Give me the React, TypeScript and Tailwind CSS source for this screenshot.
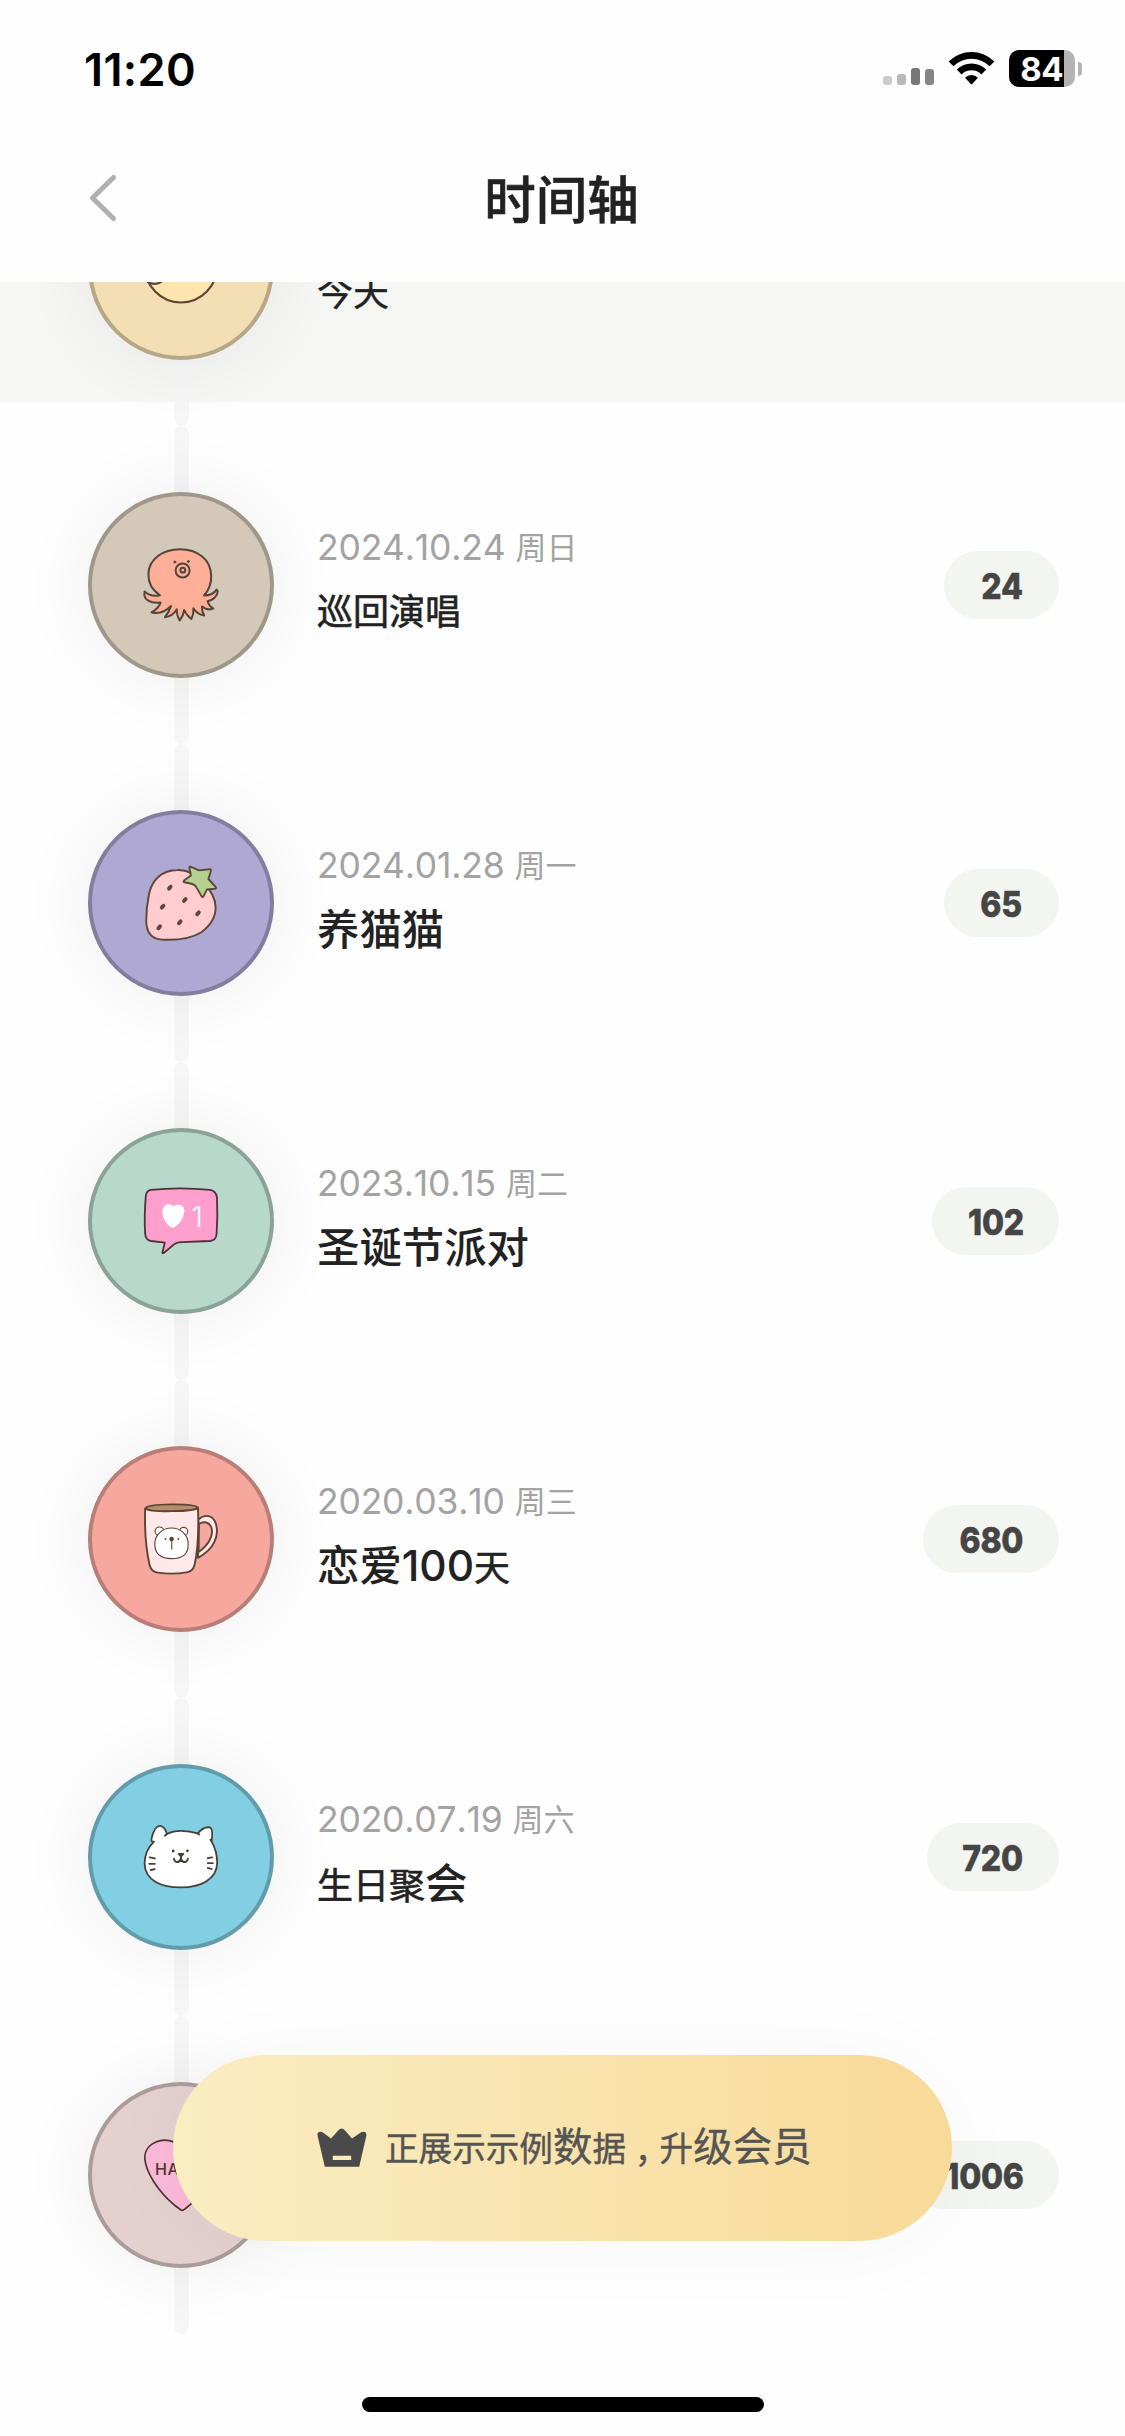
import type { ReactNode } from 'react';
import clsx from 'clsx';

interface Part {
  text: string;
  className: string;
}

interface TimelineEvent {
  date: string;
  weekday: string;
  title: Part[];
  days: string;
  circle: string;
  pill: string;
  icon: ReactNode;
}

const SM = 'text-[36px] font-normal [-webkit-text-stroke:0.6px_#222]';
const LG = 'text-[42.4px] font-medium';

function Chick() {
  return (
    <g stroke="#5d4436" strokeWidth="2.2" fill="#fee5ae" strokeLinecap="round">
      <ellipse cx="93" cy="91" rx="36.5" ry="37.5" />
      <path d="M60 108 Q68 113 77 105" />
    </g>
  );
}

function Octopus() {
  return (
    <g stroke="#54453a" strokeWidth="2" strokeLinejoin="round" strokeLinecap="round" fill="#ffae98">
      <path d="M72 103.3 C64 98 60.2 91 60.4 82 C60.8 67 75 57.3 92 57.3 C109 57.3 123 67 123.2 84 C123.4 92 120.5 98.5 116 103.5 C122 103.5 126.5 101 128.6 97.6 C130.6 99 129.6 106.5 119.6 109.2 C120.6 112.5 122.5 115 125.4 116.3 C121.5 118.3 117.5 117.3 114 114.5 C113.8 118 114.6 121 116.2 123.6 C111.5 122.8 107.8 120.2 105.4 116.3 C105.7 120 105.2 123.5 103.4 127 C100 124.6 97.6 121.5 96.2 118 C95.6 122 94.4 125.2 91.8 128.4 C89.6 125 88.6 121.4 88.8 117.2 C86.2 121.6 82.2 124.6 77 125.2 C79.8 121.6 81.8 118 83 114 C77.6 119.4 70.5 122.4 63.6 120.2 C68 118 71 114.8 72.6 110.6 C62 111.5 54.6 107.5 56.6 99.4 C60.6 103.6 65.6 104.6 72 103.3 Z" />
      <circle cx="94.6" cy="78.5" r="7" />
      <circle cx="94.8" cy="78.2" r="2.4" />
      <circle cx="86.8" cy="70" r="1" fill="#54453a" strokeWidth="1" />
      <circle cx="100.4" cy="69.5" r="1" fill="#54453a" strokeWidth="1" />
    </g>
  );
}

const seeds = [
  [81.8, 77.7],
  [96.8, 90],
  [74.6, 96.7],
  [110, 103.3],
  [91.8, 112.3],
  [71.2, 117.3],
];

function Strawberry() {
  return (
    <g stroke="#5d4637" strokeWidth="1.9" strokeLinejoin="round">
      <path
        d="M89.3 60 C74 60 64 70 61 84 C59 94 58.2 104 58.2 111 C58.4 123 64 129 74 129.6 C90 130.4 104 128 113 122.5 C122 116 127.8 108 127.6 97 C127.4 82 108 59 89.3 60 Z"
        fill="#ffcdcf"
      />
      <path
        d="M103 56.8 Q101 56 101.4 58 L102.9 65.5 L96 70.6 Q94.8 71.8 96.6 72.2 L104.5 74 Q107.5 75.2 108.6 77.6 L113.6 86.4 Q114.8 87.8 115.6 86.2 L119 79.4 L126.8 78.8 Q128.8 78.4 127.6 76.8 L120.4 69 L123 60.8 Q123.4 59 121.4 59.2 L111 60.4 Z"
        fill="#b5d18f"
      />
      {seeds.map(([x, y]) => (
        <ellipse key={x} cx={x} cy={y} rx="1.8" ry="3" fill="#5d4637" strokeWidth="0.6" transform={`rotate(38 ${x} ${y})`} />
      ))}
    </g>
  );
}

function LikeBubble() {
  return (
    <g>
      <path
        d="M63 61.8 C82 59.8 104 60 122 61.8 Q128.6 63 129 70 C129.6 82 129.4 94 128.6 106 Q128 112.4 122 113 L94 114.2 Q88.6 114.4 86 116.4 L75.8 125 Q74 126 74.6 123.6 L76.8 114.6 L63 113 Q57.6 112 57.2 106 C56.4 94 56.6 82 57.8 68 Q58.2 62.6 63 61.8 Z"
        fill="#ff9fce"
        stroke="#4c3230"
        strokeWidth="1.8"
        strokeLinejoin="round"
      />
      <path d="M85.4 78.4 C82 74.4 75 76 74.4 83 C74 91 80 98.6 84.4 99.8 C90 99 96.4 90 96.4 82 C95.8 76 88.4 75.4 85.4 78.4 Z" fill="#fff" />
      <text x="103.5" y="98.5" fill="#fff" fontSize="29" fontWeight="300" fontFamily="Inter, sans-serif">
        1
      </text>
    </g>
  );
}

function Mug() {
  return (
    <g stroke="#5c4431" strokeWidth="1.9" strokeLinejoin="round">
      <path
        fillRule="evenodd"
        d="M110.4 73.5 C117 67.5 125 69 128 78 C131 89 127 103 110 111.8 Z M111 77.8 C116 75.2 121 75.8 123.4 81.5 C126 90 120 99.5 110.6 106 Z"
        fill="#ffe8ea"
      />
      <path d="M57.2 62.6 C56.4 84 58 103 61.6 119 Q63.4 125.8 69.6 126.6 C79 128 90 127.8 98.6 126.4 Q104.6 125.6 106.4 119.6 C110.2 103 110.8 84 110 62.6 Z" fill="#ffe8ea" />
      <path d="M57.4 62.3 C60 57.5 106 57 110 61.6 C107 66 61 66.5 57.4 62.3 Z" fill="#b58e6c" />
      <g strokeWidth="1.1" fill="#fff">
        <circle cx="71.4" cy="85.3" r="4.3" />
        <circle cx="95.7" cy="85.5" r="4.1" />
        <path d="M83.6 82 C93 82 100 89 100.2 98 C100.4 108 95 112.6 83.6 112.6 C72 112.6 66.8 108 66.8 98 C67 89 74 82 83.6 82 Z" />
        <path d="M83.7 93 V103.6" />
      </g>
      <g fill="#5c4431" stroke="none">
        <circle cx="83.6" cy="93" r="2.3" />
        <circle cx="77.4" cy="93" r="0.9" />
        <circle cx="90.3" cy="93" r="0.9" />
      </g>
    </g>
  );
}

function Cat() {
  return (
    <g stroke="#484037" strokeWidth="1.8" strokeLinejoin="round" strokeLinecap="round" fill="none">
      <path
        fill="#fff"
        d="M66 77.6 Q62.8 78.4 63.6 74.6 C65 68 67.4 61.4 72.4 61.8 C75.6 62.4 78 66.4 79 70 Q85 66.8 93 66.8 Q102 66.8 109.6 69.4 C113 65.6 117.4 62.6 121.8 63.4 C124.8 64.4 124.4 72 123.6 77.4 C126.6 83 129.2 90 129.2 98.6 C129 116 112 123.4 93 123.4 C74 123.4 56.6 117 56.6 99 C56.8 90 61 82.4 66 77.6 Z"
      />
      <path d="M79 70 L76.8 71.8 M109.6 69.4 L111.4 70.6 M123.6 77.4 L122.4 75.8" />
      <path d="M61.6 93.3 L67 94.4 M61.2 99.8 H66.8 M62.8 106 L66.8 105.2 M124.2 93.3 L119.8 94.2 M124.8 99.2 H119.8 M123.8 105 L119.8 103.8" />
      <path d="M92.9 92 V95 Q91.4 98.6 88.4 98 Q86.2 97 86 94.8 M92.9 95 Q94.6 98.6 97.6 98 Q99.6 97 99.8 94.8" strokeWidth="2" />
      <path d="M90.6 89.8 H95.4 L93 92.4 Z" fill="#484037" />
      <g fill="#484037" stroke="none">
        <circle cx="85.2" cy="87" r="1.4" />
        <circle cx="99.4" cy="86.8" r="1.4" />
      </g>
    </g>
  );
}

function CandyHeart() {
  return (
    <g>
      <path
        d="M93 66 C87 57.6 76 56.6 68 60 C58.6 64 55.4 72 57.4 80.6 C61 97 76 116 92.6 127.8 Q94.6 129 96.6 127.2 C112 116 126 97 129 80.6 C130.6 72 127 64 118 60 C110 57 99 57.8 93 66 Z"
        fill="#fbb9d9"
        stroke="#4c3230"
        strokeWidth="1.7"
      />
      <text x="67" y="92.5" fill="#4c3230" fontSize="16" fontWeight="500" fontFamily="Inter, sans-serif" letterSpacing="0.6">
        HAPPY
      </text>
    </g>
  );
}

const events: TimelineEvent[] = [
  {
    date: '2024.10.24',
    weekday: '周日',
    title: [{ text: '巡回演唱', className: SM }],
    days: '24',
    circle: 'bg-[#d4c9b8] border-[#9f978a]',
    pill: 'w-[115px]',
    icon: <Octopus />,
  },
  {
    date: '2024.01.28',
    weekday: '周一',
    title: [{ text: '养猫猫', className: LG }],
    days: '65',
    circle: 'bg-[#afa8d2] border-[#837e9e]',
    pill: 'w-[115px]',
    icon: <Strawberry />,
  },
  {
    date: '2023.10.15',
    weekday: '周二',
    title: [{ text: '圣诞节派对', className: LG }],
    days: '102',
    circle: 'bg-[#b8d8cb] border-[#8aa298]',
    pill: 'w-[127px]',
    icon: <LikeBubble />,
  },
  {
    date: '2020.03.10',
    weekday: '周三',
    title: [
      { text: '恋爱100', className: LG },
      { text: '天', className: SM },
    ],
    days: '680',
    circle: 'bg-[#f7a89e] border-[#b97e77]',
    pill: 'w-[136px]',
    icon: <Mug />,
  },
  {
    date: '2020.07.19',
    weekday: '周六',
    title: [
      { text: '生日聚', className: SM },
      { text: '会', className: LG },
    ],
    days: '720',
    circle: 'bg-[#82cee2] border-[#629baa]',
    pill: 'w-[132px]',
    icon: <Cat />,
  },
];

function StatusBar() {
  return (
    <div className="flex h-[114px] items-start justify-between pl-[84px] pr-[43px] pt-[50px]">
      <span className="mt-[-4px] text-[45px] font-semibold leading-[48px] tracking-[0.4px] text-black">11:20</span>
      <div className="flex items-start">
        <div className="mt-[18px] flex h-[17px] items-end gap-[5px]">
          <i className="h-[9px] w-[9px] rounded-[3px] bg-[#cbcbcb]" />
          <i className="h-[11px] w-[9px] rounded-[3px] bg-[#b9b9b9]" />
          <i className="h-[17px] w-[9px] rounded-[3px] bg-[#777]" />
          <i className="h-[16px] w-[9px] rounded-[3px] bg-[#858585]" />
        </div>
        <svg className="ml-[14px] mt-[1px] h-[35px] w-[47px]" viewBox="0 0 47 35">
          <path d="M0.6 10.4 A32.4 32.4 0 0 1 46.4 10.4 L41.6 15.2 A25.6 25.6 0 0 0 5.4 15.2 Z" />
          <path d="M8.8 18.6 A20.8 20.8 0 0 1 38.2 18.6 L33.4 23.4 A14 14 0 0 0 13.6 23.4 Z" />
          <path d="M17 26.8 A9.2 9.2 0 0 1 30 26.8 L24.4 32.8 Q23.5 33.8 22.6 32.8 Z" />
        </svg>
        <div className="ml-[14px] flex h-[37px] w-[66px] items-center rounded-[10px] bg-[#b3b3b3]">
          <div className="flex h-full w-[55px] items-center justify-end rounded-l-[10px] bg-black pr-[1px] pt-[1px] text-[33px] font-bold leading-none tracking-[-0.5px] text-white">
            84
          </div>
        </div>
        <i className="ml-[3px] mt-[12px] h-[14px] w-[4px] rounded-r-full bg-[#b3b3b3]" />
      </div>
    </div>
  );
}

function Header() {
  return (
    <header className="relative z-10 h-[282px] bg-[#fefefe]">
      <StatusBar />
      <div className="grid h-[168px] grid-cols-3 items-center px-[88px]">
        <svg className="h-[50px] w-[30px]" viewBox="0 0 30 50" fill="none" stroke="#b0b0b0" strokeWidth="5" strokeLinecap="round" strokeLinejoin="round">
          <path d="M25.5 4.5 L4.5 25 L25.5 45.5" />
        </svg>
        <h1 className="-ml-[2px] pt-[4px] text-center text-[51.5px] font-medium leading-[60px] text-[#222] [-webkit-text-stroke:0.6px_#222]">时间轴</h1>
      </div>
    </header>
  );
}

function Marker({ circle, children }: { circle: string; children: ReactNode }) {
  return (
    <div className="relative shrink-0">
      <div className="absolute left-[85.5px] top-[-66px] h-[318px] w-[15px] rounded-full bg-[#f6f6f6]" />
      <div className={clsx('relative h-[186px] w-[186px] rounded-full border-4 shadow-[0_0_75px_rgba(0,0,0,0.07)]', circle)}>
        <svg className="-m-1 h-[186px] w-[186px]" viewBox="0 0 186 186" fill="none">
          {children}
        </svg>
      </div>
    </div>
  );
}

function EventRow({ event }: { event: TimelineEvent }) {
  return (
    <li className="flex h-[270px] items-center pl-[88px] pr-[66px]">
      <Marker circle={event.circle}>{event.icon}</Marker>
      <div className="ml-[43px] flex-1 pb-[8px]">
        <div className="h-[61px] whitespace-nowrap text-[35.5px] leading-[60px] text-[#a3a3a3]">
          <span className="tracking-[-0.2px] [font-kerning:none]">{event.date}</span>{' '}
          <span className="relative -top-px text-[31px]">{event.weekday}</span>
        </div>
        <div className="h-[66px] whitespace-nowrap leading-[66px] text-[#222]">
          {event.title.map((part) => (
            <span key={part.text} className={part.className}>
              {part.text}
            </span>
          ))}
        </div>
      </div>
      <DayPill width={event.pill} days={event.days} />
    </li>
  );
}

function DayPill({ width, days }: { width: string; days: string }) {
  return (
    <div className={clsx('flex h-[68px] shrink-0 items-center justify-center rounded-full bg-[#f2f5f0] pt-[4px]', width)}>
      <span className="scale-x-[0.9] text-[35.5px] font-extrabold tracking-[-0.3px] text-[#454545] [-webkit-text-stroke:0.5px_#454545]">
        {days}
      </span>
    </div>
  );
}

function UpgradeButton() {
  return (
    <button className="absolute left-[173px] top-[2055px] z-10 flex h-[186px] w-[779px] items-center rounded-full bg-linear-to-r from-[#faedc2] to-[#f8da98] pl-[144px] text-[#555] shadow-[0_6px_90px_rgba(0,0,0,0.035)]">
      <svg className="h-[40px] w-[50px]" viewBox="0 0 50 40">
        <path
          fillRule="evenodd"
          fill="#4a4a4a"
          d="M0.4 7 Q0.4 3.4 4 3.8 Q5.6 4.2 6.6 5 L14 10.6 L21.4 2.2 Q24.6 -1.2 27.8 2.2 L35 10.6 L43 5 Q44.6 3.8 46.4 3.8 Q49.8 4 49.4 7.6 L42.2 38.8 H7.8 Z M15.8 27.8 V32 H34.2 V27.8 Z"
        />
      </svg>
      <span className="ml-[18px] mt-[2px] flex h-[60px] items-baseline whitespace-nowrap text-[33.6px] leading-[56px] [-webkit-text-stroke:0.4px_#555]">
        <span>正展示示例</span>
        <span className="text-[39.5px]">数</span>
        <span>据</span>
        <span className="relative top-[12px] font-['Noto_Sans_CJK_TC']">，</span>
        <span>升</span>
        <span className="text-[39.5px]">级会员</span>
      </span>
    </button>
  );
}

export default function App() {
  return (
    <div className="relative h-[2436px] w-[1125px] overflow-hidden bg-[#fefefe] font-[Inter,'Noto_Sans_CJK_SC',sans-serif]">
      <Header />
      <ul className="-mt-[150px] flex flex-col gap-[48px]">
        <li className="flex h-[270px] items-center bg-[#f6f7f4] pl-[88px]">
          <Marker circle="bg-[#f4deb3] border-[#b7a786]">
            <Chick />
          </Marker>
          <div className="ml-[43px] mt-[52px] text-[36px] leading-[60px] text-[#222] [-webkit-text-stroke:0.4px_#222]">今天</div>
        </li>
        {events.map((event) => (
          <EventRow key={event.date} event={event} />
        ))}
        <li className="flex h-[270px] items-center justify-between pl-[88px] pr-[66px]">
          <Marker circle="bg-[#e4d0cf] border-[#ab9c9b]">
            <CandyHeart />
          </Marker>
          <DayPill width="w-[149px]" days="1006" />
        </li>
      </ul>
      <UpgradeButton />
      <div className="absolute bottom-[24px] left-[362px] h-[15px] w-[402px] rounded-full bg-black" />
    </div>
  );
}
